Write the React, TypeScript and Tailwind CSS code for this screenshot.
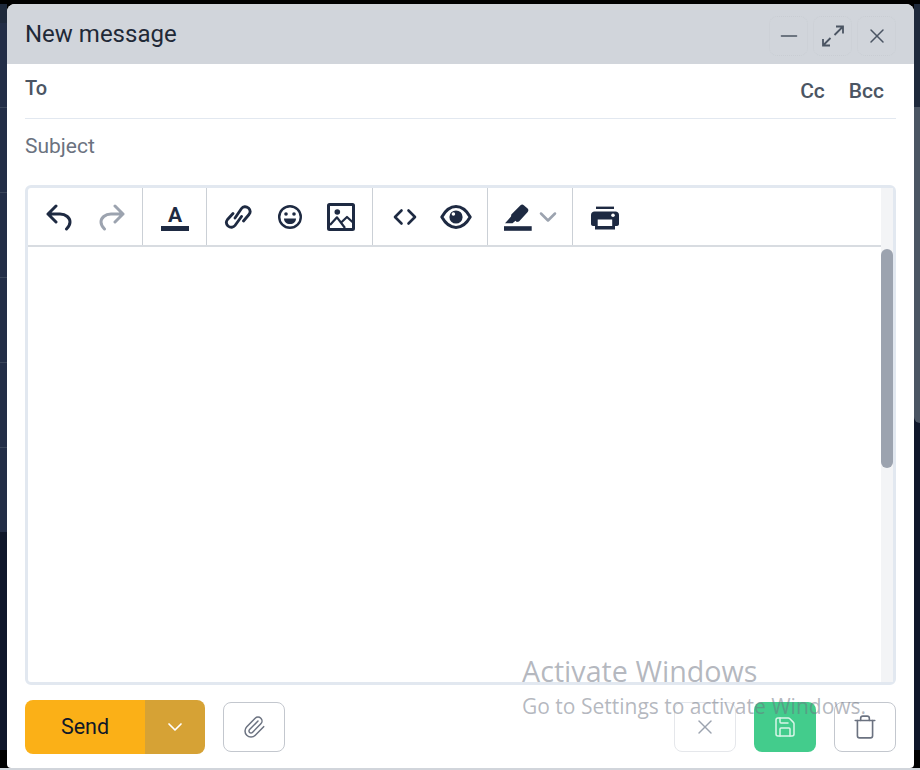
import React from "react";
import { Minus, Paperclip, Save, Trash, X, ChevronDown } from "lucide-react";

const Sep = ({ className, children }: { className: string; children: React.ReactNode }) => (
  <div className={`flex items-center border-r border-[#cbd0d6] ${className}`}>{children}</div>
);

const UndoIcon = ({ className }: { className?: string }) => (
  <svg className={className} width="28" height="28" viewBox="0 0 28 28" fill="none" stroke="currentColor" strokeWidth="3" strokeLinecap="round" strokeLinejoin="round">
    <path d="M11 3 L3 11 L11 19 M3 11 H15 C21 11 25 15 25 19 C25 22 23 24.5 21.5 26" />
  </svg>
);

const LinkIcon = () => (
  <svg width="28" height="28" viewBox="0 0 28 28" fill="none" stroke="currentColor" strokeWidth="2.8" strokeLinecap="round" strokeLinejoin="round">
    <path d="M11 15 L17.5 5.5 C19 3.5 22 3 24.5 5 C26.5 7 26.5 9.5 25 11.5 L19.5 18" />
    <path d="M17.5 13.5 L11 22.5 C9.5 24.5 6.5 25 4 23 C2 21 2 18.5 3.5 16.5 L9 10.5" />
  </svg>
);

const SmileIcon = () => (
  <svg width="28" height="28" viewBox="0 0 28 28" fill="none">
    <circle cx="14" cy="14" r="10.8" stroke="currentColor" strokeWidth="2.4" />
    <circle cx="10" cy="11" r="1.8" fill="currentColor" />
    <circle cx="18" cy="11" r="1.8" fill="currentColor" />
    <path d="M8 15.5 H20 C20 19 17.5 21 14 21 C10.5 21 8 19 8 15.5 Z" fill="currentColor" />
  </svg>
);

const ImageIcon = () => (
  <svg width="28" height="28" viewBox="0 0 28 28" fill="none" stroke="currentColor" strokeWidth="3" strokeLinejoin="round">
    <rect x="1.5" y="1.5" width="25" height="25" rx="1" />
    <circle cx="10.3" cy="9" r="2.8" fill="currentColor" stroke="none" />
    <path d="M3 22 L10 14.3 L18 25 M14.7 19 L20 14 L26 19.5" strokeWidth="2.2" />
  </svg>
);

const CodeIcon = () => (
  <svg width="28" height="28" viewBox="0 0 28 28" fill="none" stroke="currentColor" strokeWidth="2.6" strokeLinecap="round" strokeLinejoin="round">
    <path d="M10.5 7.5 L4 14 L10.5 20.5 M17.5 7.5 L24 14 L17.5 20.5" />
  </svg>
);

const EyeIcon = () => (
  <svg width="32" height="28" viewBox="0 0 32 28" fill="none">
    <path d="M1.8 14 C6 6.5 11 3.6 16 3.6 C21 3.6 26 6.5 30.2 14 C26 21.5 21 24.4 16 24.4 C11 24.4 6 21.5 1.8 14 Z" stroke="currentColor" strokeWidth="3" strokeLinejoin="round" />
    <circle cx="16" cy="14" r="6.6" fill="currentColor" />
    <circle cx="13.4" cy="11" r="1.8" fill="#ffffff" />
  </svg>
);

const HighlighterIcon = () => (
  <svg width="28" height="28" viewBox="0 0 28 28" fill="currentColor">
    <rect x="0" y="23.2" width="27.7" height="4.6" />
    <path d="M1 20.3 L7 13.5 L7.3 11.5 L16.5 2.3 C17.5 1.3 18.8 1.3 19.8 2.2 L23.6 5.6 C24.6 6.6 24.6 8 23.7 9 L15 18.5 L12.8 19 L11.5 17.8 L8.5 20.3 Z" />
  </svg>
);

const PrinterIcon = () => (
  <svg width="28" height="28" viewBox="0 0 28 28" fill="currentColor">
    <rect x="5" y="3.6" width="18" height="2.4" />
    <path d="M3.5 8.6 H24.5 C26.5 8.6 28 10 28 12 V21 C28 22 27 23 26 23 H24 V26.4 H4 V23 H2 C1 23 0 22 0 21 V12 C0 10 1.5 8.6 3.5 8.6 Z" />
    <rect x="6.7" y="16.5" width="14.5" height="6.5" fill="#ffffff" />
    <circle cx="22" cy="12.3" r="1.8" fill="#ffffff" />
  </svg>
);

const ExpandIcon = () => (
  <svg width="24" height="24" viewBox="0 0 24 24" fill="none" stroke="currentColor" strokeWidth="1.8">
    <path d="M2 21.5 L9.5 14 M2 15 V21.5 H9 M22 2.5 L13.5 11 M15 2.5 H22 V9.5" />
  </svg>
);

const HeaderBtn = ({ children }: { children: React.ReactNode }) => (
  <button className="flex h-10 w-[39px] items-center justify-center rounded-lg border border-dotted border-[#c9cdd3] text-[#4b5563]">
    {children}
  </button>
);

const rows = [0, 1, 2, 3, 4];

export default function App() {
  return (
    <div className="relative flex h-[770px] w-[920px] flex-col overflow-hidden bg-black font-['Roboto',sans-serif]">
      <div className="h-[4px] bg-black" />
      <div className="flex flex-1">
        {/* page behind the dialog */}
        <div className="flex w-[7px] flex-col bg-black">
          <div className="h-[19px] bg-[#1e293b]" />
          {rows.map((r) => (
            <div key={r} className="h-[85px] border-b border-[#3a4559] bg-[#222d46]" />
          ))}
          <div className="h-[84px] bg-[#222d46]" />
          <div className="h-[218px] bg-[#0f172a]" />
        </div>

        <div className="flex w-[907px] flex-col rounded-t-lg rounded-b-sm bg-white">
          <div className="flex h-[60px] items-center justify-between rounded-t-lg bg-[#d1d5db] px-[18px]">
            <span className="text-[24px] text-[#1f2937]">New message</span>
            <div className="mt-1 flex gap-[5px]">
              <HeaderBtn>
                <Minus size={26} strokeWidth={1.4} />
              </HeaderBtn>
              <HeaderBtn>
                <ExpandIcon />
              </HeaderBtn>
              <HeaderBtn>
                <X size={24} strokeWidth={1.5} />
              </HeaderBtn>
            </div>
          </div>

          <div className="flex flex-1 flex-col px-[18px] pb-[14px]">
            <div className="flex h-[55px] justify-between border-b border-[#e2e8f0] pr-3">
              <span className="mt-[9px] text-[20px] font-medium text-[#4b5563]">To</span>
              <div className="mt-[12px] flex gap-6 text-[21px] font-medium text-[#4b5563]">
                <span>Cc</span>
                <span>Bcc</span>
              </div>
            </div>
            <div className="h-[66px] pt-[13px] text-[21px] leading-7 text-[#6b7280]">Subject</div>

            <div className="flex h-[500px] rounded-md border-[3px] border-[#e2e8f0]">
              <div className="flex flex-1 flex-col">
                <div className="flex h-[59px] border-b-2 border-[#d8dce1] text-[#1e2a42]">
                  <Sep className="gap-[25px] pl-[17px] pr-[16px]">
                    <UndoIcon />
                    <UndoIcon className="-scale-x-100 text-[#9ca3af]" />
                  </Sep>
                  <Sep className="pl-[18px] pr-[17px]">
                    <div className="flex w-7 flex-col items-center pt-[2px]">
                      <span className="text-[21px] leading-[20px] font-bold">A</span>
                      <div className="mt-[1px] h-[5px] w-7 bg-[#1e2a42]" />
                    </div>
                  </Sep>
                  <Sep className="px-[17px]">
                    <LinkIcon />
                    <div className="ml-6">
                      <SmileIcon />
                    </div>
                    <div className="ml-[23px]">
                      <ImageIcon />
                    </div>
                  </Sep>
                  <Sep className="gap-[21px] pl-[18px] pr-[15px]">
                    <CodeIcon />
                    <EyeIcon />
                  </Sep>
                  <Sep className="gap-[2px] pl-[16px] pr-[10px]">
                    <HighlighterIcon />
                    <ChevronDown size={28} strokeWidth={2.2} className="text-[#9ca3af]" />
                  </Sep>
                  <div className="flex items-center pl-[18px]">
                    <PrinterIcon />
                  </div>
                </div>
                <div className="flex-1" />
              </div>
              <div className="w-3 bg-[#f3f4f6] pt-[61px]">
                <div className="h-[219px] rounded-full bg-[#9ca3af]" />
              </div>
            </div>

            <div className="mt-[15px] flex items-center justify-between">
              <div className="flex items-center gap-[18px]">
                <div className="flex h-[54px] overflow-hidden rounded-lg">
                  <button className="w-[120px] bg-[#fbb017] text-[21.5px] text-[#111827]">Send</button>
                  <button className="flex w-[60px] items-center justify-center bg-[#d6a235] text-white">
                    <ChevronDown size={24} strokeWidth={1.7} />
                  </button>
                </div>
                <button className="flex h-[50px] w-[62px] items-center justify-center rounded-lg border border-[#c3c7ce] text-[#6b7280]">
                  <Paperclip size={24} strokeWidth={1.5} />
                </button>
              </div>
              <div className="flex items-center gap-[18px]">
                <button className="flex h-[50px] w-[62px] items-center justify-center rounded-lg border border-[#e5e7eb] text-[#9ca3af]">
                  <X size={24} strokeWidth={1.4} />
                </button>
                <button className="flex h-[50px] w-[62px] items-center justify-center rounded-lg bg-[#43cc8c] text-[#d9f5e8]">
                  <Save size={24} strokeWidth={1.5} />
                </button>
                <button className="flex h-[50px] w-[62px] items-center justify-center rounded-lg border border-[#c3c7ce] text-[#6b7280]">
                  <Trash size={26} strokeWidth={1.5} />
                </button>
              </div>
            </div>
          </div>
        </div>

        <div className="flex w-[6px] flex-col bg-[#0f172a]">
          <div className="h-[103px] bg-[#1e293b]" />
          <div className="h-[316px] rounded-bl-md bg-[#4b5563]" />
          <div className="flex-1" />
          <div className="h-[18px] bg-black" />
        </div>
      </div>
      <div className="h-[2px] bg-[#d1d5db]" />

      {/* windows watermark over the dialog */}
      <div className="pointer-events-none absolute left-[522px] top-[652px] font-['Open_Sans',sans-serif] text-[#6b7280]/50">
        <div className="text-[28.7px] leading-[38px]">Activate Windows</div>
        <div className="mt-[3px] text-[21px] leading-[26px]">Go to Settings to activate Windows.</div>
      </div>
    </div>
  );
}
